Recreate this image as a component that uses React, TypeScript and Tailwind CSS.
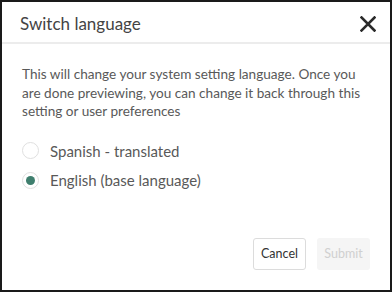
import { useState } from 'react'

export default function App() {
  const [lang, setLang] = useState('en')

  return (
    <div className="w-[392px] h-[292px] bg-white border-2 border-[#1a1a1a] flex flex-col" style={{ fontFamily: 'Lato, "Open Sans", sans-serif' }}>
      <div className="h-[42px] flex items-center justify-between pl-[18px] pr-[13px] pt-[3px] border-b-2 border-[#ececec]">
        <span className="text-[17px] text-[#444]">Switch language</span>
        <button className="w-[18px] h-[18px] flex items-center justify-center">
          <svg width="16" height="16" viewBox="0 0 16 16">
            <path d="M1.5 1.5 L14.5 14.5 M14.5 1.5 L1.5 14.5" stroke="#2a2a2a" strokeWidth="2.6" strokeLinecap="square" />
          </svg>
        </button>
      </div>
      <div className="flex-1 flex flex-col px-[20px] pt-[21px]">
        <p className="text-[13.6px] leading-[18.5px] text-[#595959]">
          This will change your system setting language. Once you are done previewing, you can change it back through this setting or user preferences
        </p>
        <div className="flex flex-col gap-[7px] mt-[19px]">
          <label className="flex items-center gap-[11px] cursor-pointer" onClick={() => setLang('es')}>
            <span className="w-[17px] h-[17px] rounded-full border border-[#e0e0e0] flex items-center justify-center">
              {lang === 'es' && <span className="w-[9px] h-[9px] rounded-full bg-[#3f7f6e]" />}
            </span>
            <span className="text-[15px] text-[#595959]">Spanish - translated</span>
          </label>
          <label className="flex items-center gap-[11px] cursor-pointer" onClick={() => setLang('en')}>
            <span className="w-[17px] h-[17px] rounded-full border border-[#e0e0e0] flex items-center justify-center">
              {lang === 'en' && <span className="w-[9px] h-[9px] rounded-full bg-[#3f7f6e]" />}
            </span>
            <span className="text-[15px] text-[#595959]">English (base language)</span>
          </label>
        </div>
        <div className="mt-auto mb-[20px] flex justify-end gap-[11px]">
          <button className="w-[53px] h-[32px] rounded-[3px] border border-[#dcdcdc] bg-white text-[12.5px] text-[#333]">Cancel</button>
          <button className="w-[53px] h-[32px] rounded-[3px] bg-[#f5f5f5] text-[12.5px] text-[#d0d0d0]">Submit</button>
        </div>
      </div>
    </div>
  )
}
